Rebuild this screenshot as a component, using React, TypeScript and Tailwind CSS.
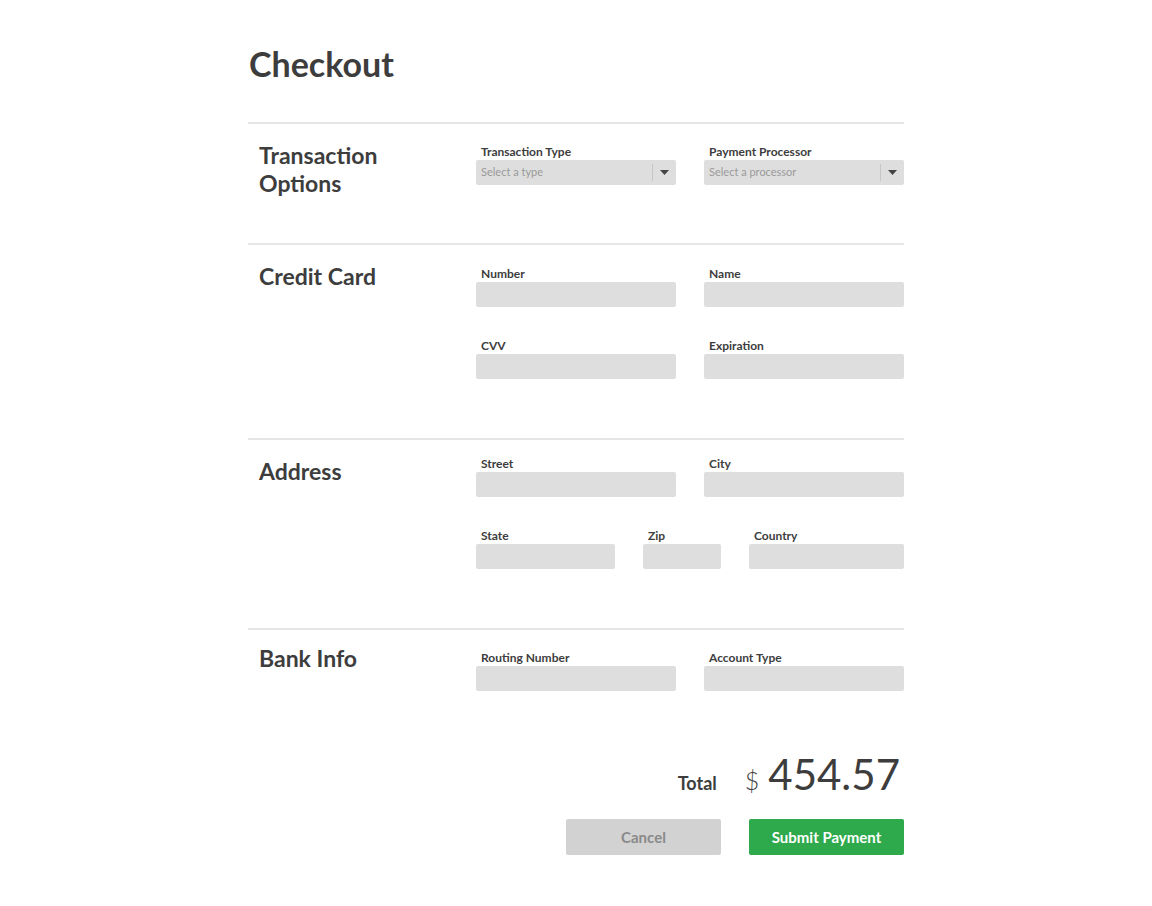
const font = { fontFamily: 'Lato, "Open Sans", sans-serif' };

function Label({ children }: { children: string }) {
  return <p className="px-[5px] text-[12px] leading-[14px] font-bold text-[#3d3d3d]">{children}</p>;
}

function Field({ label, className = '' }: { label: string; className?: string }) {
  return (
    <div className={className}>
      <Label>{label}</Label>
      <div className="mt-[1px] h-[25px] rounded-[2px] bg-[#dedede]" />
    </div>
  );
}

function Select({ label, placeholder }: { label: string; placeholder: string }) {
  return (
    <div>
      <Label>{label}</Label>
      <div className="mt-[1px] flex h-[25px] items-center rounded-[2px] bg-[#dedede]">
        <span className="flex-1 px-[5px] text-[11px] text-[#9a9a9a]">{placeholder}</span>
        <span className="h-[17px] w-px bg-[#c6c6c6]" />
        <span className="flex w-[23px] justify-center">
          <svg width="9" height="5" viewBox="0 0 9 5">
            <path d="M0 0h9L4.5 5z" fill="#444" />
          </svg>
        </span>
      </div>
    </div>
  );
}

function Section({
  title,
  pt,
  pb = 'pb-[59px]',
  headPt,
  children,
}: {
  title: React.ReactNode;
  pt: string;
  pb?: string;
  headPt: string;
  children: React.ReactNode;
}) {
  return (
    <section className={`flex border-t-2 border-[#e6e6e6] ${pt} ${pb}`}>
      <h2 className={`w-[228px] shrink-0 pl-[11px] text-[23px] leading-[28px] font-bold text-[#3d3d3d] ${headPt}`}>
        {title}
      </h2>
      <div className="flex-1">{children}</div>
    </section>
  );
}

export default function App() {
  return (
    <div className="min-h-screen bg-white" style={font}>
      <div className="mx-auto w-[656px] pt-[44px] pb-[51px]">
        <h1 className="pl-px text-[34px] leading-[40px] font-bold text-[#3d3d3d]">Checkout</h1>

        <div className="mt-[38px]">
          <Section
            title={
              <>
                Transaction
                <br />
                Options
              </>
            }
            pt="pt-[21px]"
            pb="pb-[46px]"
            headPt="-mt-[4px]"
          >
            <div className="grid grid-cols-2 gap-x-[28px]">
              <Select label="Transaction Type" placeholder="Select a type" />
              <Select label="Payment Processor" placeholder="Select a processor" />
            </div>
          </Section>

          <Section title="Credit Card" pt="pt-[22px]" headPt="-mt-[5px]">
            <div className="grid grid-cols-2 gap-x-[28px] gap-y-[32px]">
              <Field label="Number" />
              <Field label="Name" />
              <Field label="CVV" />
              <Field label="Expiration" />
            </div>
          </Section>

          <Section title="Address" pt="pt-[17px]" headPt="pt-[0px]">
            <div className="grid grid-cols-2 gap-x-[28px]">
              <Field label="Street" />
              <Field label="City" />
            </div>
            <div className="mt-[32px] flex">
              <Field label="State" className="w-[139px]" />
              <Field label="Zip" className="ml-[28px] w-[78px]" />
              <Field label="Country" className="ml-[28px] flex-1" />
            </div>
          </Section>

          <Section title="Bank Info" pt="pt-[21px]" headPt="-mt-[7px]">
            <div className="grid grid-cols-2 gap-x-[28px]">
              <Field label="Routing Number" />
              <Field label="Account Type" />
            </div>
          </Section>
        </div>

        <div className="-mt-[4px] flex items-baseline justify-end pr-[4px]">
          <span className="text-[18px] font-bold text-[#3d3d3d]">Total</span>
          <span className="ml-[28px] text-[25px] font-light text-[#3d3d3d]">$</span>
          <span className="ml-[9px] text-[42px] leading-[56px] text-[#3d3d3d]">454.57</span>
        </div>

        <div className="mt-[17px] flex justify-end gap-[28px]">
          <button className="h-[36px] w-[155px] rounded-[2px] bg-[#d2d2d2] text-[15px] font-bold text-[#8a8a8a]">
            Cancel
          </button>
          <button className="h-[36px] w-[155px] rounded-[2px] bg-[#2ea94b] text-[15px] font-bold text-white">
            Submit Payment
          </button>
        </div>
      </div>
    </div>
  );
}
